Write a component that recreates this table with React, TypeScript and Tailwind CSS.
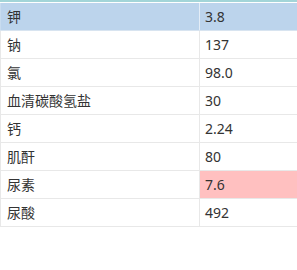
const rows: { name: string; value: string; flag?: 'high' }[] = [
  { name: '钾', value: '3.8' },
  { name: '钠', value: '137' },
  { name: '氯', value: '98.0' },
  { name: '血清碳酸氢盐', value: '30' },
  { name: '钙', value: '2.24' },
  { name: '肌酐', value: '80' },
  { name: '尿素', value: '7.6', flag: 'high' },
  { name: '尿酸', value: '492' },
];

export default function App() {
  return (
    <div
      className="w-[297px] h-[270px] bg-white text-[14px] text-[#333] overflow-hidden"
      style={{ fontFamily: '"Noto Sans", "Noto Sans CJK SC", sans-serif' }}
    >
      <div className="h-[2px] bg-[#a3d5d8]" />
      <div className="h-[1px] bg-white" />
      {rows.map((row, i) => {
        const selected = i === 0;
        return (
          <div
            key={row.name}
            className={
              'grid grid-cols-[200px_1fr] h-[28px] border-b ' +
              (selected ? 'bg-[#bcd4ec] border-[#d8e4f0]' : 'border-[#e8e8e8]')
            }
          >
            <div
              className={
                'flex items-center pl-[6px] border-l border-r leading-none ' +
                (selected ? 'border-[#c8dcef] border-r-[#e4edf7]' : 'border-[#e8e8e8]')
              }
            >
              {row.name}
            </div>
            <div
              className={
                'flex items-center pl-[5px] leading-none ' +
                (row.flag === 'high' ? 'bg-[#ffc0c0]' : '')
              }
            >
              {row.value}
            </div>
          </div>
        );
      })}
    </div>
  );
}
